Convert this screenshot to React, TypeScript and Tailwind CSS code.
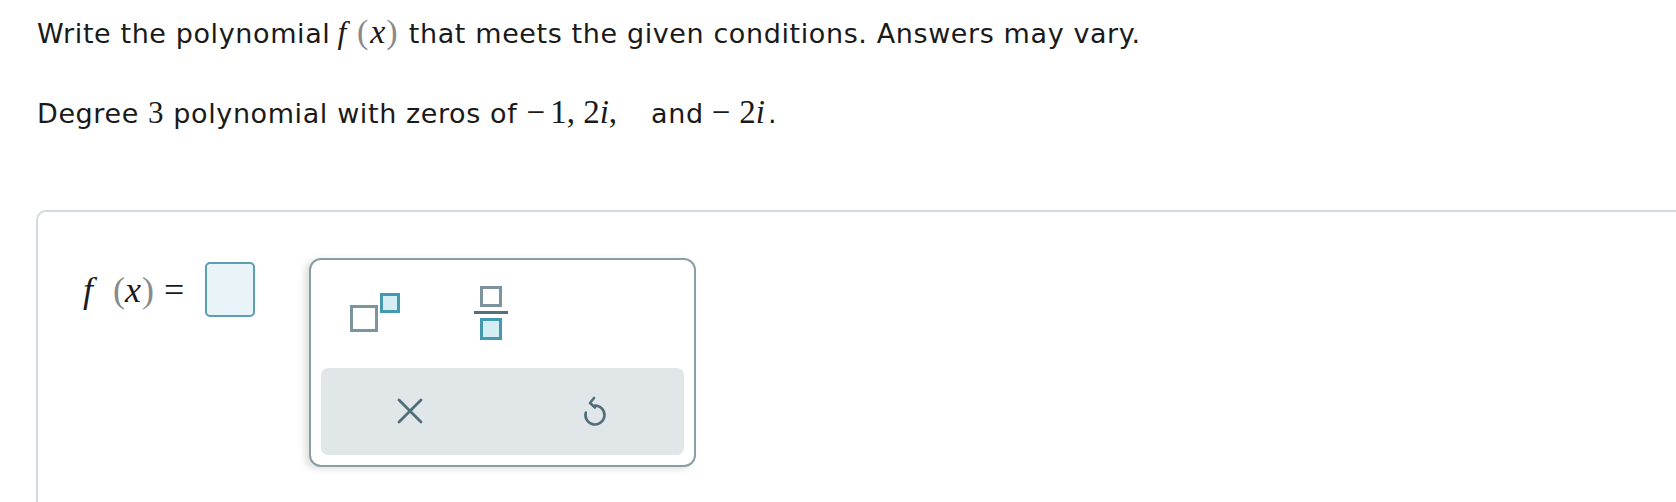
import React from "react";

const sans = "font-['DejaVu_Sans',Verdana,sans-serif]";
const serif = "font-['Liberation_Serif','Times_New_Roman',serif]";

function Paren({ children }: { children: React.ReactNode }) {
  return <span className={`${serif} not-italic text-[#8a8a8a]`}>{children}</span>;
}

function ExponentIcon() {
  return (
    <svg width="50" height="39" viewBox="0 0 50 39">
      <rect x="1.5" y="13.5" width="25" height="24" fill="#fff" stroke="#7c949d" strokeWidth="3" />
      <rect x="31.5" y="1.5" width="17" height="17" fill="#d5eef4" stroke="#4399b0" strokeWidth="3" />
    </svg>
  );
}

function FractionIcon() {
  return (
    <svg width="34" height="54" viewBox="0 0 34 54">
      <rect x="7.5" y="1.5" width="19" height="18" fill="#fff" stroke="#7c949d" strokeWidth="3" />
      <rect x="0" y="25" width="34" height="3" fill="#53707b" />
      <rect x="7.5" y="33.5" width="19" height="19" fill="#d5eef4" stroke="#4399b0" strokeWidth="3" />
    </svg>
  );
}

function ClearIcon() {
  return (
    <svg width="26" height="26" viewBox="0 0 26 26">
      <path d="M2 2 L24 24 M24 2 L2 24" stroke="#4e6e7a" strokeWidth="2.8" strokeLinecap="round" />
    </svg>
  );
}

function UndoIcon() {
  return (
    <svg width="30" height="32" viewBox="0 0 30 32">
      <path
        d="M14 10.5 A9.5 9.5 0 1 1 4.8 17.5"
        fill="none"
        stroke="#4e6e7a"
        strokeWidth="2.6"
        strokeLinecap="round"
      />
      <path
        d="M13 3 L9 8 L14 12.5"
        fill="none"
        stroke="#4e6e7a"
        strokeWidth="2.6"
        strokeLinecap="round"
        strokeLinejoin="round"
      />
    </svg>
  );
}

function Palette() {
  return (
    <div className="flex h-[209px] w-[387px] flex-col rounded-[12px] border-2 border-[#8a9ea6] bg-white p-[10px] shadow-[-4px_2px_7px_rgba(0,0,0,0.13)]">
      <div className="flex h-[86px] gap-[8px]">
        <button type="button" className="flex w-[108px] items-center justify-center">
          <ExponentIcon />
        </button>
        <button type="button" className="flex w-[108px] items-center justify-center">
          <FractionIcon />
        </button>
      </div>
      <div className="mt-[12px] flex h-[88px] rounded-[7px] bg-[#e1e6e9]">
        <button type="button" className="flex flex-1 items-center justify-center pr-[10px]">
          <ClearIcon />
        </button>
        <button type="button" className="flex flex-1 items-center justify-center">
          <UndoIcon />
        </button>
      </div>
    </div>
  );
}

export default function App() {
  return (
    <div className={`h-[502px] w-full overflow-hidden bg-white text-[#1a1a1a] ${sans}`}>
      <p className="pl-[37px] pt-[18px] text-[27px] leading-[32px] tracking-[0.6px]">
        Write the polynomial
        <span className={`${serif} ml-[7px] text-[32px] italic leading-[20px]`}>f</span>
        <span className={`${serif} ml-[10px] mr-[2px] text-[34px] italic leading-[20px] tracking-normal`}>
          <Paren>(</Paren>
          <span className="ml-[2px]">x</span>
          <span className="ml-[1px]">
            <Paren>)</Paren>
          </span>
        </span>{" "}
        that meets the given conditions. Answers may vary.
      </p>

      <p className="mt-[48px] pl-[37px] text-[27px] leading-[32px] tracking-[0.6px]">
        Degree <span className={`${serif} text-[31px] leading-[20px]`}>3</span> polynomial with
        zeros of{" "}
        <span className={`${serif} text-[33px] leading-[20px] tracking-normal`}>
          <span className="mr-[5px]">−</span>1, 2<i>i</i>,
        </span>
        <span className="ml-[34px]">and</span>
        <span className={`${serif} ml-[8px] text-[33px] leading-[20px] tracking-normal`}>
          <span className="mr-[9px]">−</span>2<i>i</i>
        </span>
        <span className="ml-[3px]">.</span>
      </p>

      <div className="ml-[36px] mt-[80px] h-[400px] rounded-tl-[10px] border-l-2 border-t-2 border-[#d3dadd] pl-[45px] pt-[46px]">
        <div className="flex items-start">
          <div className="mt-[4px] flex h-[55px] items-center">
            <span className={`${serif} text-[36px] leading-none`}>
              <i>f</i>
              <span className="ml-[20px]">
                <Paren>(</Paren>
                <i>x</i>
                <span className="ml-[1px]">
                  <Paren>)</Paren>
                </span>
              </span>
              <span className="ml-[10px]">=</span>
            </span>
            <div className="ml-[21px] h-[55px] w-[50px] rounded-[5px] border-2 border-[#5b9fb3] bg-[#e9f4f8]" />
          </div>
          <div className="ml-[54px]">
            <Palette />
          </div>
        </div>
      </div>
    </div>
  );
}
